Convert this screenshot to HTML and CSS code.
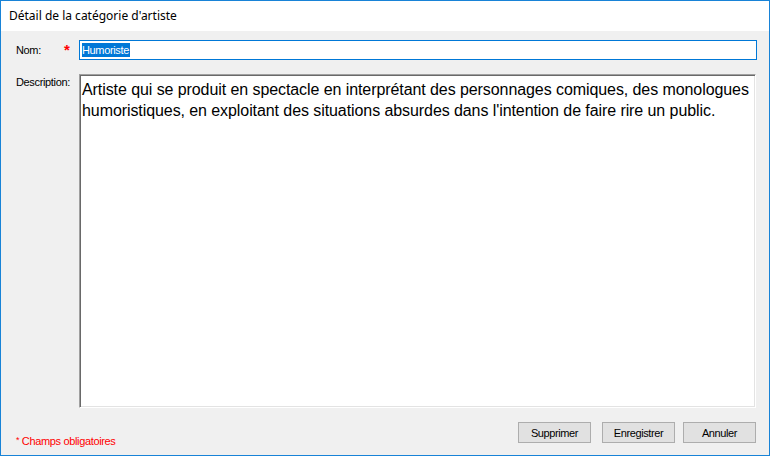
FILE: index.html
```html
<!DOCTYPE html>
<html lang="fr">
<head>
<meta charset="utf-8">
<title>Détail de la catégorie d'artiste</title>
<link rel="stylesheet" href="styles.css">
</head>
<body>
<div class="window">
  <div class="titlebar">Détail de la catégorie d'artiste</div>
  <div class="content">
    <div class="row row-name">
      <span class="label">Nom:</span>
      <span class="req">*</span>
      <div class="input"><span class="sel">Humoriste</span></div>
    </div>
    <div class="row row-desc">
      <span class="label label-desc">Description:</span>
      <div class="textarea">Artiste qui se produit en spectacle en interprétant des personnages comiques, des monologues humoristiques, en exploitant des situations absurdes dans l'intention de faire rire un public.</div>
    </div>
    <div class="footer">
      <span class="note"><span class="note-star">*</span> Champs obligatoires</span>
      <div class="buttons">
        <button class="btn">Supprimer</button>
        <button class="btn btn-save">Enregistrer</button>
        <button class="btn btn-cancel">Annuler</button>
      </div>
    </div>
  </div>
</div>
</body>
</html>
```

FILE: styles.css
```css
html, body {
  margin: 0;
  padding: 0;
  background: #f0f0f0;
}
.window {
  width: 770px;
  height: 456px;
  box-sizing: border-box;
  border: 1px solid #1883d7;
  display: flex;
  flex-direction: column;
  background: #f0f0f0;
  font-family: "Liberation Sans", Arial, sans-serif;
  font-size: 11px;
  letter-spacing: -0.35px;
  color: #000;
}
.titlebar {
  height: 30px;
  flex: none;
  background: #fff;
  font-family: "Noto Sans", "Open Sans", sans-serif;
  font-size: 12px;
  letter-spacing: 0;
  line-height: 30px;
  padding-left: 8px;
  color: #000;
}
.content {
  flex: 1;
  display: flex;
  flex-direction: column;
  padding: 9px 12px 0 15px;
  min-height: 0;
}
.row {
  display: flex;
  align-items: flex-start;
}
.label {
  width: 48px;
  flex: none;
}
.row-name .label {
  line-height: 20px;
}
.req {
  width: 15px;
  flex: none;
  color: #ff0000;
  font-size: 15px;
  font-weight: bold;
  line-height: 20px;
  box-sizing: border-box;
}
.input {
  flex: 1;
  height: 20px;
  box-sizing: border-box;
  border: 1px solid #0078d7;
  background: #fff;
  padding: 2px 0 0 2px;
  line-height: 14px;
  font-size: 11px;
}
.sel {
  background: #0078d7;
  color: #fff;
  display: inline-block;
  height: 14px;
  padding-right: 1px;
}
.row-desc {
  margin-top: 14px;
}
.label-desc {
  width: 63px;
  padding-top: 2px;
}
.textarea {
  flex: 1;
  margin-right: 1px;
  height: 334px;
  box-sizing: border-box;
  background: #fff;
  border-style: solid;
  border-width: 1px;
  border-color: #a0a0a0 #ffffff #ffffff #a0a0a0;
  box-shadow: inset 1px 1px 0 #696969, inset -1px -1px 0 #e3e3e3;
  padding: 4px 0 0 2px;
  font-size: 16px;
  letter-spacing: -0.08px;
  line-height: 21px;
  color: #000;
}
.footer {
  display: flex;
  align-items: flex-start;
  justify-content: space-between;
  margin-top: 14px;
  margin-right: 1px;
}
.note {
  color: #ff0000;
  font-size: 11px;
  margin-top: 13px;
}
.note-star {
  font-size: 9px;
  vertical-align: 2px;
}
.buttons {
  display: flex;
}
.btn {
  width: 73px;
  height: 21px;
  box-sizing: border-box;
  border: 1px solid #adadad;
  background: #e1e1e1;
  font-family: "Liberation Sans", Arial, sans-serif;
  font-size: 11px;
  letter-spacing: -0.4px;
  color: #000;
  padding: 0;
  margin: 0;
}
.btn-save {
  margin-left: 11px;
}
.btn-cancel {
  margin-left: 8px;
}
```
